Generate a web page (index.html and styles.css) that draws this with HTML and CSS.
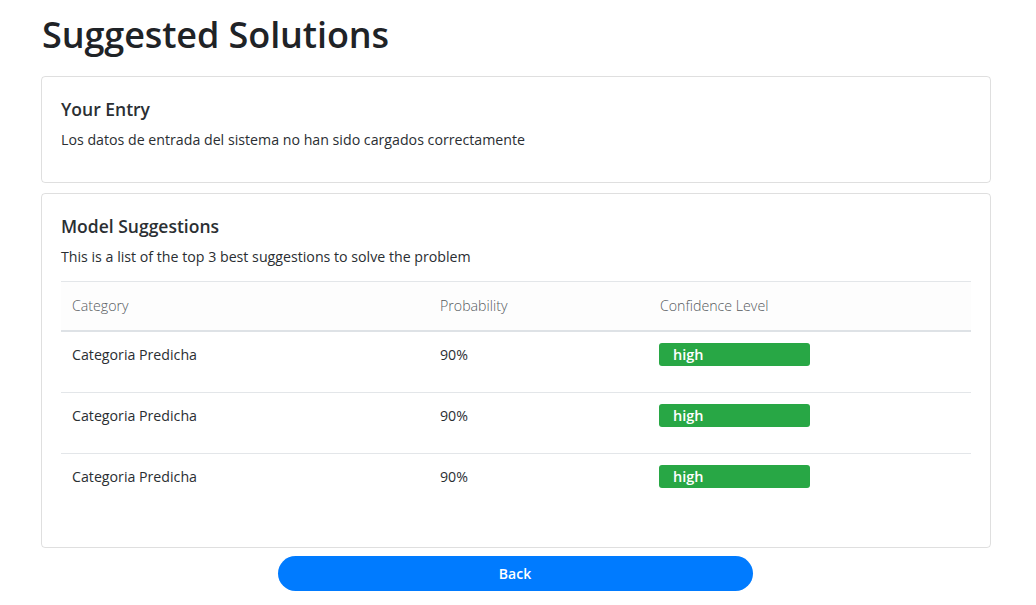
FILE: index.html
```html
<!DOCTYPE html>
<html lang="en">
<head>
<meta charset="utf-8">
<title>Suggested Solutions</title>
<link rel="stylesheet" href="styles.css">
</head>
<body>
<main class="page">
  <h1 class="title">Suggested Solutions</h1>

  <section class="card entry">
    <h5 class="card-title">Your Entry</h5>
    <p class="card-text">Los datos de entrada del sistema no han sido cargados correctamente</p>
  </section>

  <section class="card suggestions">
    <h5 class="card-title">Model Suggestions</h5>
    <p class="card-text">This is a list of the top 3 best suggestions to solve the problem</p>
    <table class="table">
      <thead>
        <tr>
          <th class="c1">Category</th>
          <th class="c2">Probability</th>
          <th class="c3">Confidence Level</th>
        </tr>
      </thead>
      <tbody>
        <tr>
          <td>Categoria Predicha</td>
          <td>90%</td>
          <td><span class="badge">high</span></td>
        </tr>
        <tr>
          <td>Categoria Predicha</td>
          <td>90%</td>
          <td><span class="badge">high</span></td>
        </tr>
        <tr>
          <td>Categoria Predicha</td>
          <td>90%</td>
          <td><span class="badge">high</span></td>
        </tr>
      </tbody>
    </table>
  </section>

  <div class="actions">
    <button class="btn" type="button">Back</button>
  </div>
</main>
</body>
</html>
```

FILE: styles.css
```css
* { box-sizing: border-box; }

body {
  margin: 0;
  font-family: "Open Sans", "Noto Sans", sans-serif;
  color: #212529;
  background: #ffffff;
}

.page {
  width: 950px;
  margin-left: 41px;
  padding-top: 12px;
}

.title {
  margin: 0 0 18px 1px;
  font-size: 36px;
  line-height: 46px;
  font-weight: 600;
  letter-spacing: -0.1px;
  color: #1f2327;
}

.card {
  border: 1px solid rgba(0, 0, 0, 0.125);
  border-radius: 4px;
  padding: 19px 19px 0 19px;
  margin-bottom: 10px;
}

.entry {
  height: 107px;
}

.suggestions {
  height: 355px;
  margin-bottom: 8px;
}

.card-title {
  margin: 0 0 8px 0;
  font-size: 17.5px;
  line-height: 26px;
  font-weight: 600;
  color: #2b2f33;
}

.card-text {
  margin: 0;
  font-size: 14.2px;
  line-height: 20px;
  color: #2a2e32;
}

.table {
  width: 100%;
  margin-top: 14px;
  border-collapse: collapse;
  font-size: 14.2px;
}

.table th {
  text-align: left;
  font-weight: 300;
  color: #555a5e;
  padding: 12px 12px 12px 11px;
  line-height: 24px;
  border-top: 1px solid #e3e6e9;
  border-bottom: 2px solid #dee2e6;
  background: #fdfdfd;
}

.table .c1 { width: 368px; }
.table .c2 { width: 220px; }

.table td {
  vertical-align: top;
  padding: 11px 12px 25px 11px;
  line-height: 24px;
  border-top: 1px solid #e3e6e9;
  height: 60px;
  color: #2a2e32;
}

.table tbody tr:first-child td {
  border-top: none;
}

.badge {
  display: block;
  width: 151px;
  height: 23px;
  margin-left: -1px;
  background: #28a745;
  color: #ffffff;
  border-radius: 3px;
  font-size: 14.5px;
  font-weight: 600;
  line-height: 23px;
  padding-left: 14px;
}

.actions {
  display: flex;
  justify-content: center;
  padding-right: 2px;
}

.btn {
  width: 475px;
  height: 35px;
  border: none;
  border-radius: 18px;
  background: #007bff;
  color: #ffffff;
  font-family: "Open Sans", "Noto Sans", sans-serif;
  font-size: 14px;
  font-weight: 600;
}
```
